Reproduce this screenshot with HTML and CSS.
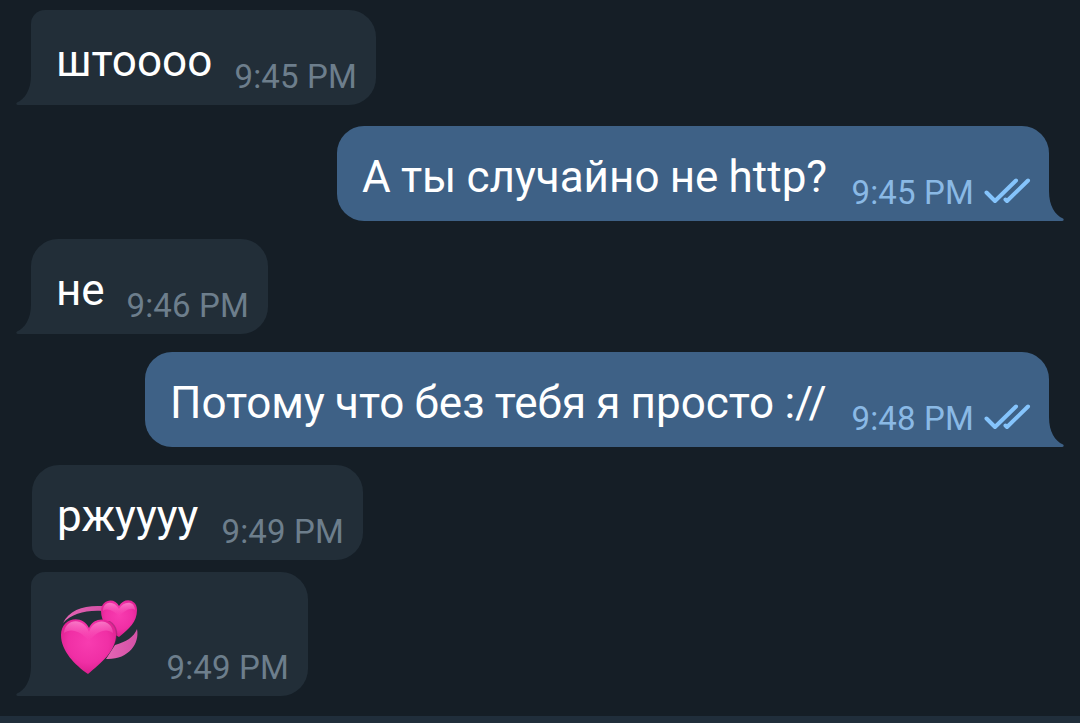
FILE: index.html
```html
<!DOCTYPE html>
<html lang="ru">
<head>
    <meta charset="UTF-8">
    <meta name="viewport" content="width=device-width, initial-scale=1.0">
    <title>Чат</title>
    <link rel="stylesheet" href="styles.css">
</head>
<body>

    <svg class="defs" width="0" height="0">
        <symbol id="tail" viewBox="0 0 30 40">
            <path d="M15 0V9C15 24 9 33 1 36.5C0 37 0 39 2 39H30V0Z"/>
        </symbol>
        <symbol id="checks" viewBox="0 0 48 30">
            <path d="M3.5 15.5L12 24L33 3.5M22.5 22.5L24 24L45 3.5"/>
        </symbol>
    </svg>

    <div class="chat">
        <div class="message in first" style="width: 345px">
            <svg class="tail"><use href="#tail"/></svg>
            <span class="text">штоооо</span>
            <span class="time">9:45 PM</span>
        </div>

        <div class="message out" style="width: 712px">
            <svg class="tail"><use href="#tail"/></svg>
            <span class="text">А ты случайно не http?</span>
            <span class="time">9:45 PM</span>
            <svg class="checks"><use href="#checks"/></svg>
        </div>

        <div class="message in" style="width: 237px">
            <svg class="tail"><use href="#tail"/></svg>
            <span class="text">не</span>
            <span class="time">9:46 PM</span>
        </div>

        <div class="message out" style="width: 904px">
            <svg class="tail"><use href="#tail"/></svg>
            <span class="text">Потому что без тебя я просто ://</span>
            <span class="time">9:48 PM</span>
            <svg class="checks"><use href="#checks"/></svg>
        </div>

        <div class="message in group-start" style="width: 331px">
            <span class="text">ржуууу</span>
            <span class="time">9:49 PM</span>
        </div>

        <div class="message in group-end" style="width: 277px">
            <svg class="tail"><use href="#tail"/></svg>
            <svg class="hearts" viewBox="0 0 80 78">
                <defs>
                    <linearGradient id="ribbon" x1="0" y1="0" x2="1" y2="0">
                        <stop offset="0" stop-color="#e565b4"/>
                        <stop offset="1" stop-color="#d451a6"/>
                    </linearGradient>
                    <radialGradient id="heart" cx=".5" cy=".42" r=".62">
                        <stop offset="0" stop-color="#f83cb0"/>
                        <stop offset=".6" stop-color="#f02fa5"/>
                        <stop offset="1" stop-color="#d81c8a"/>
                    </radialGradient>
                    <linearGradient id="shine" x1="0" y1="0" x2="0" y2="1">
                        <stop offset="0" stop-color="#ff9ad8" stop-opacity=".7"/>
                        <stop offset="1" stop-color="#ff5cc0" stop-opacity="0"/>
                    </linearGradient>
                </defs>
                <path fill="url(#ribbon)" d="M3 24C9 11 24 6 42 7V12C25 11 12 15 3 24Z"/>
                <path fill="url(#ribbon)" d="M55 46C66 43 74 38 77 30C80 45 68 61 46 60Z"/>
                <path fill="url(#heart)" d="M59 38C49 33 41 23 41 12C41 0 55 -2 59 7C64 -2 77 0 77 11C77 23 69 30 59 38Z"/>
                <path fill="url(#shine)" d="M43 12C43 2 54 1 59 10C64 1 75 2 75 11C71 8 66 11 59 17C53 11 47 9 43 12Z"/>
                <path fill="#7a1f5c" opacity=".45" d="M50 22C58 27 59 36 55 45L44 52V22Z"/>
                <path fill="url(#heart)" d="M28 75C15 66 1 52 1 36C1 18 23 15 29 29C35 15 56 19 56 36C56 52 41 64 28 75Z"/>
                <path fill="url(#shine)" d="M4 34C5 19 24 18 29 33C34 18 52 20 53 34C47 29 38 31 29 42C20 31 10 29 4 34Z"/>
            </svg>
            <span class="time">9:49 PM</span>
        </div>
    </div>

    <div class="input-bar"></div>

</body>
</html>
```

FILE: styles.css
```css
body {
    font-family: Roboto, "Noto Sans", sans-serif;
    color: #fff;
    background-color: #151e26;
    margin: 0;
    height: 723px;
    display: flex;
    flex-direction: column;
    overflow: hidden;
}
.defs {
    position: absolute;
}
.chat {
    flex: 1;
    display: flex;
    flex-direction: column;
    align-items: flex-start;
    padding: 10px 31px 0;
}
.message {
    --bubble: #222e38;
    position: relative;
    display: flex;
    align-items: flex-end;
    box-sizing: border-box;
    height: 95px;
    padding: 0 19px 9px 25px;
    margin-bottom: 18px;
    border-radius: 27px;
    background-color: var(--bubble);
    white-space: nowrap;
}
.in {
    border-bottom-left-radius: 0;
}
.first {
    border-top-left-radius: 14px;
    margin-bottom: 21px;
}
.out {
    --bubble: #3e6186;
    align-self: flex-end;
    padding-right: 18px;
    border-bottom-right-radius: 0;
}
.group-start {
    margin-left: 1px;
    margin-bottom: 12px;
    border-bottom-left-radius: 14px;
}
.group-end {
    height: 124px;
    margin-bottom: 0;
    border-top-left-radius: 14px;
}
.text {
    font-size: 44px;
    line-height: 52px;
    word-spacing: -0.7px;
    margin-bottom: 9px;
}
.time {
    margin-left: auto;
    font-size: 33px;
    line-height: 39px;
    letter-spacing: 0.15px;
    color: #6d7e8c;
}
.out .time {
    color: #8ab9e5;
}
.checks {
    width: 48px;
    height: 30px;
    margin: 0 0 5px 9px;
    fill: none;
    stroke: #85c4fc;
    stroke-width: 4;
    stroke-linecap: round;
    stroke-linejoin: round;
}
.tail {
    position: absolute;
    left: -15px;
    bottom: -1px;
    width: 30px;
    height: 40px;
    fill: var(--bubble);
}
.out .tail {
    left: auto;
    right: -15px;
    transform: scaleX(-1);
}
.hearts {
    width: 80px;
    height: 78px;
    margin: 0 0 10px 4px;
}
.input-bar {
    height: 7px;
    background-color: #202e3b;
}
```
